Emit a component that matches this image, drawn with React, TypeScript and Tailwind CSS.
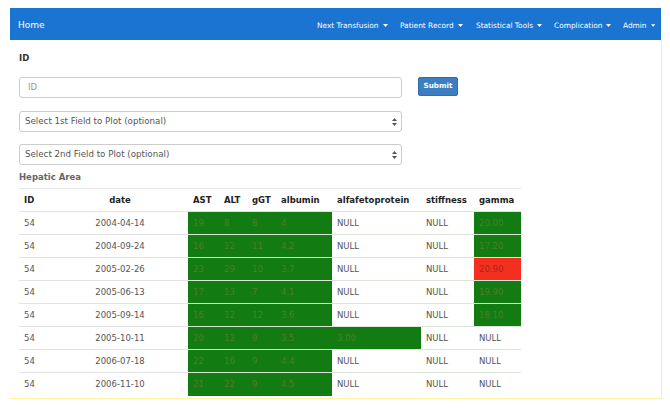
import React from "react";

const FONT = { fontFamily: '"DejaVu Sans", Verdana, sans-serif' };

function Caret() {
  return (
    <svg width="5" height="3" viewBox="0 0 5 3" className="ml-[4px] inline-block">
      <path d="M0 0 L5 0 L2.5 3 Z" fill="white" />
    </svg>
  );
}

function UpDown() {
  return (
    <svg width="5" height="8" viewBox="0 0 5 8">
      <path d="M0 3 L2.5 0 L5 3 Z" fill="#555" />
      <path d="M0 5 L2.5 8 L5 5 Z" fill="#555" />
    </svg>
  );
}

type Cell = { v: string; c?: "g" | "r" };
const G = (v: string): Cell => ({ v, c: "g" });
const R = (v: string): Cell => ({ v, c: "r" });
const N = (v: string): Cell => ({ v });

const rows: { date: string; cells: Cell[] }[] = [
  { date: "2004-04-14", cells: [G("19"), G("8"), G("8"), G("4"), N("NULL"), N("NULL"), G("20.00")] },
  { date: "2004-09-24", cells: [G("16"), G("12"), G("11"), G("4.2"), N("NULL"), N("NULL"), G("17.20")] },
  { date: "2005-02-26", cells: [G("23"), G("29"), G("10"), G("3.7"), N("NULL"), N("NULL"), R("20.90")] },
  { date: "2005-06-13", cells: [G("17"), G("13"), G("7"), G("4.1"), N("NULL"), N("NULL"), G("19.90")] },
  { date: "2005-09-14", cells: [G("16"), G("12"), G("12"), G("3.6"), N("NULL"), N("NULL"), G("18.10")] },
  { date: "2005-10-11", cells: [G("20"), G("12"), G("9"), G("3.5"), G("3.00"), N("NULL"), N("NULL")] },
  { date: "2006-07-18", cells: [G("22"), G("16"), G("9"), G("4.4"), N("NULL"), N("NULL"), N("NULL")] },
  { date: "2006-11-10", cells: [G("21"), G("22"), G("9"), G("4.5"), N("NULL"), N("NULL"), N("NULL")] },
];

const headers = ["AST", "ALT", "gGT", "albumin", "alfafetoprotein", "stiffness", "gamma"];

function cellClass(c?: "g" | "r") {
  if (c === "g") return "bg-[#127b12] text-[#4d7f26]";
  if (c === "r") return "bg-[#f3301f] text-[#a8281a]";
  return "text-[#555]";
}

export default function App() {
  return (
    <div className="w-[670px] h-[408px] bg-white overflow-hidden pl-[10px] pt-[8px]" style={FONT}>
      <div className="w-[652px]">
        <div className="h-[32px] w-[651px] bg-[#1b74d2] flex items-center pt-[4px] text-white">
          <div className="pl-[8px] text-[9px] flex-1">Home</div>
          <div className="flex items-center text-[7.4px] pr-[6px]">
            <div className="w-[83px] flex items-center">Next Transfusion<Caret /></div>
            <div className="w-[76px] flex items-center">Patient Record<Caret /></div>
            <div className="w-[78px] flex items-center">Statistical Tools<Caret /></div>
            <div className="w-[69px] flex items-center">Complication<Caret /></div>
            <div className="w-[32px] flex items-center">Admin<Caret /></div>
          </div>
        </div>
        <div className="h-[359px] border-r border-b border-[#fbf3a0] pl-[9px] pt-[12px]">
          <div className="text-[8.5px] font-bold leading-[12px] text-[#333]">ID</div>
          <div className="flex items-start mt-[13px]">
            <div className="w-[383px] h-[21px] border border-[#ccc] rounded-[3px] flex items-center pl-[8px] text-[8.5px] text-[#999]">
              ID
            </div>
            <div className="ml-[16px] w-[40px] h-[19px] rounded-[2px] bg-[#3d7ec0] border border-[#2f6ea8] flex items-center justify-center text-[7.2px] font-bold text-white">
              Submit
            </div>
          </div>
          <div className="mt-[13px] w-[383px] h-[21px] border border-[#ccc] rounded-[3px] flex items-center justify-between pl-[5px] pr-[4px] text-[8.7px] text-[#555]">
            <span>Select 1st Field to Plot (optional)</span>
            <UpDown />
          </div>
          <div className="mt-[12px] w-[383px] h-[21px] border border-[#ccc] rounded-[3px] flex items-center justify-between pl-[5px] pr-[4px] text-[8.7px] text-[#555]">
            <span>Select 2nd Field to Plot (optional)</span>
            <UpDown />
          </div>
          <div className="mt-[6px] text-[8.5px] font-bold leading-[12px] text-[#666]">Hepatic Area</div>
          <table className="mt-[5px] w-[502px] table-fixed border-collapse text-[8.5px]">
            <colgroup>
              <col className="w-[33px]" />
              <col className="w-[136px]" />
              <col className="w-[31px]" />
              <col className="w-[28px]" />
              <col className="w-[29px]" />
              <col className="w-[56px]" />
              <col className="w-[89px]" />
              <col className="w-[53px]" />
              <col className="w-[47px]" />
            </colgroup>
            <thead>
              <tr className="h-[23px] border-t border-[#e5e5e5] text-[#222] font-bold">
                <th className="text-left pl-[5px] font-bold">ID</th>
                <th className="text-center font-bold">date</th>
                {headers.map((h) => (
                  <th key={h} className="text-left pl-[5px] font-bold">{h}</th>
                ))}
              </tr>
            </thead>
            <tbody>
              {rows.map((r) => (
                <tr key={r.date} className="h-[23px]">
                  <td className="border-t border-[#e3e3e3] pl-[5px] text-[#555]">54</td>
                  <td className="border-t border-[#e3e3e3] text-center text-[#555]">{r.date}</td>
                  {r.cells.map((c, i) => (
                    <td key={i} className={"border-t border-[#d9e6d9] pl-[5px] " + cellClass(c.c)}>
                      {c.v}
                    </td>
                  ))}
                </tr>
              ))}
            </tbody>
          </table>
        </div>
      </div>
    </div>
  );
}
